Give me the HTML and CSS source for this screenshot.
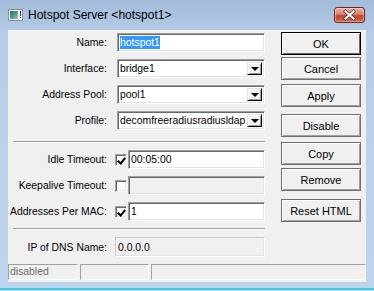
FILE: index.html
```html
<!DOCTYPE html>
<html lang="en">

<head>
    <meta charset="UTF-8">
    <title>Hotspot Server &lt;hotspot1&gt;</title>
    <link rel="stylesheet" href="styles.css">
</head>

<body>
    <div class="window">
        <!-- Barra de titulo -->
        <div class="titlebar">
            <svg class="app-icon" width="15" height="12" viewBox="0 0 15 12">
                <defs>
                    <linearGradient id="scr" x1="0" y1="0" x2="1" y2="1">
                        <stop offset="0" stop-color="#2f6f5c" />
                        <stop offset="0.5" stop-color="#4f9a86" />
                        <stop offset="1" stop-color="#a9c4d6" />
                    </linearGradient>
                </defs>
                <rect x="0.5" y="0.5" width="14" height="11" fill="#f4f4f4" stroke="#8c8c8c" />
                <rect x="2" y="2" width="8" height="8" fill="url(#scr)" />
                <rect x="12" y="2" width="1" height="5" fill="#1f3a5a" />
                <rect x="12" y="8" width="1" height="1" fill="#1f3a5a" />
            </svg>
            <span class="title">Hotspot Server &lt;hotspot1&gt;</span>
            <div class="close">
                <svg width="31" height="16" viewBox="0 0 31 16">
                    <path d="M11.5 4.5 L19.5 11.5 M19.5 4.5 L11.5 11.5" stroke="#5b3a36" stroke-width="3.6" stroke-linecap="square" fill="none" />
                    <path d="M11.5 4.5 L19.5 11.5 M19.5 4.5 L11.5 11.5" stroke="#fff" stroke-width="2" stroke-linecap="square" fill="none" />
                </svg>
            </div>
        </div>

        <!-- Conteudo -->
        <div class="client">
            <div class="content">
                <div class="form">
                    <div class="grid grid-top">
                        <label class="lbl">Name:</label>
                        <div class="field"><span class="sel">hotspot1</span></div>

                        <label class="lbl">Interface:</label>
                        <div class="field combo">bridge1<span class="drop"><i class="arrow"></i></span></div>

                        <label class="lbl">Address Pool:</label>
                        <div class="field combo">pool1<span class="drop"><i class="arrow"></i></span></div>

                        <label class="lbl">Profile:</label>
                        <div class="field combo">decomfreeradiusradiusldap<span class="drop"><i class="arrow"></i></span></div>
                    </div>

                    <div class="sep"></div>

                    <div class="grid grid-bottom">
                        <label class="lbl">Idle Timeout:</label>
                        <div class="check-row">
                            <span class="check on"></span>
                            <div class="field">00:05:00</div>
                        </div>

                        <label class="lbl">Keepalive Timeout:</label>
                        <div class="check-row">
                            <span class="check"></span>
                            <div class="field disabled"></div>
                        </div>

                        <label class="lbl">Addresses Per MAC:</label>
                        <div class="check-row">
                            <span class="check on"></span>
                            <div class="field">1</div>
                        </div>
                    </div>

                    <div class="sep sep-2"></div>

                    <div class="grid grid-ip">
                        <label class="lbl">IP of DNS Name:</label>
                        <div class="field static">0.0.0.0</div>
                    </div>
                </div>

                <div class="buttons">
                    <button class="btn btn-default">OK</button>
                    <button class="btn btn-cancel">Cancel</button>
                    <button class="btn btn-apply">Apply</button>
                    <button class="btn btn-disable">Disable</button>
                    <button class="btn btn-copy">Copy</button>
                    <button class="btn btn-remove">Remove</button>
                    <button class="btn btn-reset">Reset HTML</button>
                </div>
            </div>

            <!-- Barra de status -->
            <div class="statusbar">
                <div class="status status-1">disabled</div>
                <div class="status status-2"></div>
                <div class="status status-3"></div>
            </div>
        </div>
        <div class="frame-bottom"></div>
    </div>
</body>

</html>
```

FILE: styles.css
```css
/* Reset */
* {
    margin: 0;
    padding: 0;
    box-sizing: border-box;
}

:root {
    --face: #f0f0f0;
    --shadow: #a0a0a0;
    --dark: #696969;
    --light: #e3e3e3;
    --frame: #bcd3ec;
}

body {
    width: 374px;
    height: 291px;
    overflow: hidden;
    font-family: 'Liberation Sans', Arial, sans-serif;
    font-size: 10.4px;
    color: #000;
    background: var(--frame);
}

.window {
    width: 374px;
    height: 291px;
    display: flex;
    flex-direction: column;
    background: linear-gradient(to bottom, #a2bbda 0, #b9cfe9 40px, #bdd4ec 100%);
}

/* Barra de titulo */
.titlebar {
    height: 30px;
    display: flex;
    align-items: center;
    padding: 0 9px 0 8px;
}

.app-icon {
    display: block;
}

.title {
    margin-left: 5px;
    font-size: 12px;
}

.close {
    margin-left: auto;
    width: 31px;
    height: 16px;
    border: 1px solid #6d2a22;
    border-radius: 3px;
    background: linear-gradient(to bottom, #e8b3a6 0, #d88470 45%, #c4452f 55%, #cf6a4a 100%);
    box-shadow: inset 0 0 0 1px rgba(255, 255, 255, 0.35);
}

.close svg {
    display: block;
    margin: -1px 0 0 -1px;
}

/* Area cliente */
.client {
    flex: 1;
    margin: 0 8px;
    background: var(--face);
    display: flex;
    flex-direction: column;
}

.content {
    flex: 1;
    display: flex;
}

.form {
    width: 257px;
    padding-top: 3px;
}

.grid {
    display: grid;
    grid-auto-rows: 19px;
    row-gap: 7px;
}

.grid-top {
    grid-template-columns: 99px 148px;
    column-gap: 10px;
}

.grid-bottom {
    margin-top: 7px;
    grid-template-columns: 99px 150px;
    column-gap: 8px;
}

.grid-ip {
    margin-top: 7px;
    grid-template-columns: 99px 150px;
    grid-auto-rows: 20px;
    column-gap: 8px;
}

.lbl {
    text-align: right;
    align-self: center;
    white-space: nowrap;
}

.sep {
    margin: 11px 0 0 5px;
    height: 2px;
    border-top: 1px solid var(--shadow);
    border-bottom: 1px solid #fff;
}

.sep-2 {
    margin-top: 7px;
}

/* Campos */
.field {
    position: relative;
    display: flex;
    align-items: center;
    padding-left: 2px;
    background: #fff;
    border: 1px solid;
    border-color: var(--shadow) #fff #fff var(--shadow);
    box-shadow: inset 1px 1px 0 var(--dark), inset -1px -1px 0 var(--light);
    white-space: nowrap;
    overflow: hidden;
}

.field.disabled {
    background: var(--face);
}

.field.static {
    background: var(--face);
    box-shadow: inset -1px -1px 0 var(--light);
    border-color: #c8c8c8 #fff #fff #c8c8c8;
}

.sel {
    background: #3399ff;
    color: #fff;
    line-height: 13px;
}

.drop {
    position: absolute;
    right: 2px;
    top: 2px;
    bottom: 2px;
    width: 15px;
    background: var(--face);
    border: 1px solid;
    border-color: var(--light) #000 #000 var(--light);
    box-shadow: inset 1px 1px 0 #fff, inset -1px -1px 0 var(--shadow);
    display: flex;
    align-items: center;
    justify-content: center;
}

.arrow {
    width: 0;
    height: 0;
    border-left: 4px solid transparent;
    border-right: 4px solid transparent;
    border-top: 4px solid #000;
    margin-top: 1px;
}

.check-row {
    display: flex;
    align-items: center;
    gap: 1px;
}

.check-row .field {
    flex: 1;
    height: 19px;
}

.check {
    position: relative;
    width: 12px;
    height: 12px;
    background: #fff;
    border: 1px solid;
    border-color: var(--shadow) #fff #fff var(--shadow);
    box-shadow: inset 1px 1px 0 var(--dark), inset -1px -1px 0 var(--light);
}

.check.on::after {
    content: '';
    position: absolute;
    left: 3px;
    top: 1px;
    width: 3px;
    height: 6px;
    border: solid #000;
    border-width: 0 2px 2px 0;
    transform: rotate(40deg);
}

/* Botoes */
.buttons {
    margin-left: 16px;
    width: 80px;
    display: flex;
    flex-direction: column;
}

.btn {
    height: 23px;
    font-family: 'Liberation Sans', Arial, sans-serif;
    font-size: 11px;
    color: #000;
    background: var(--face);
    border: 1px solid #707070;
    box-shadow: inset 1px 1px 0 #fff, inset -1px -1px 0 var(--shadow);
}

.btn-default {
    margin-top: 2px;
    border-color: #000;
    box-shadow: inset 1px 1px 0 #fff, inset -1px -1px 0 var(--dark);
}

.btn-cancel { margin-top: 2px; }
.btn-apply { margin-top: 4px; }
.btn-disable { margin-top: 7px; }
.btn-copy { margin-top: 5px; }
.btn-remove { margin-top: 3px; }
.btn-reset { margin-top: 8px; }

/* Barra de status */
.statusbar {
    height: 16px;
    margin-bottom: 2px;
    display: flex;
    gap: 2px;
}

.status {
    height: 16px;
    border: 1px solid;
    border-color: var(--shadow) #fff #fff var(--shadow);
    color: #6d6d6d;
    padding-left: 1px;
    line-height: 14px;
}

.status-1 { width: 70px; }
.status-2 { width: 69px; }
.status-3 { flex: 1; }

.frame-bottom {
    height: 8px;
    border-bottom: 2px solid #3fc6e6;
    margin-bottom: 1px;
}
```
